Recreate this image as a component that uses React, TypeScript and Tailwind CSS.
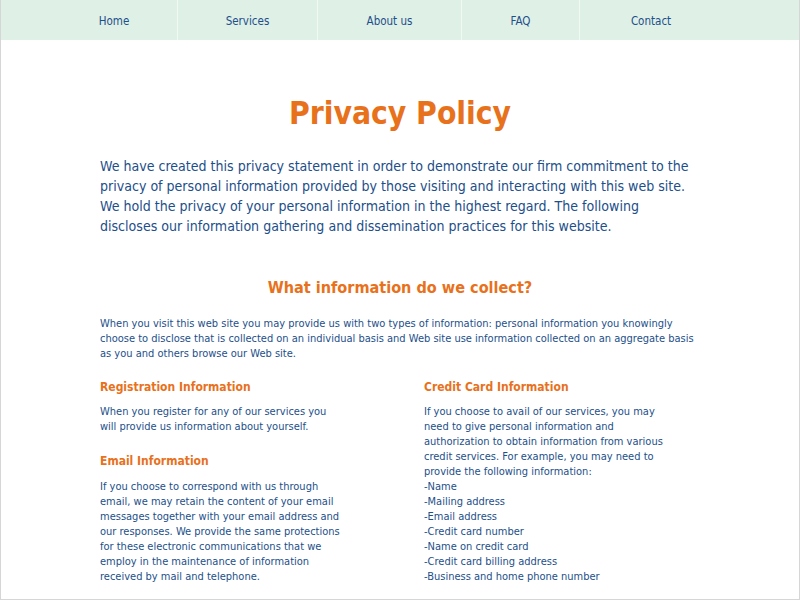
const nav = [
  { label: "Home", w: "w-[127px]" },
  { label: "Services", w: "w-[140px]" },
  { label: "About us", w: "w-[144px]" },
  { label: "FAQ", w: "w-[118px]" },
  { label: "Contact", w: "w-[142px]" },
];

const cardItems = [
  "-Name",
  "-Mailing address",
  "-Email address",
  "-Credit card number",
  "-Name on credit card",
  "-Credit card billing address",
  "-Business and home phone number",
];

export default function App() {
  return (
    <div className="h-[600px] w-[800px] overflow-hidden border border-t-0 border-[#d6d6d6] bg-white font-['DejaVu_Sans_Condensed','DejaVu_Sans',sans-serif] text-[#1d4f8a]">
      {/* top menu */}
      <nav className="flex h-10 bg-[#dff0e6] pl-[50px] text-[11.5px]">
        {nav.map((item, i) => (
          <a
            key={item.label}
            href="#"
            className={`flex items-center justify-center pt-[3px] ${item.w} ${
              i < nav.length - 1 ? "border-r border-[#f1f9f4]" : ""
            }`}
          >
            {item.label}
          </a>
        ))}
      </nav>

      <main className="px-[99px]">
        <h1 className="mt-[54px] text-center text-[31.5px] font-bold leading-[38px] text-[#e8711c]">
          Privacy Policy
        </h1>

        <p className="mt-[24px] text-[14.05px] leading-5">
          We have created this privacy statement in order to demonstrate our firm commitment to the
          privacy of personal information provided by those visiting and interacting with this web site.
          We hold the privacy of your personal information in the highest regard. The following
          discloses our information gathering and dissemination practices for this website.
        </p>

        <h2 className="mt-[41px] text-center text-[16.1px] font-bold leading-[22px] text-[#e8711c]">
          What information do we collect?
        </h2>

        <p className="mt-[16.5px] w-[595px] text-[11px] leading-[15px]">
          When you visit this web site you may provide us with two types of information: personal
          information you knowingly choose to disclose that is collected on an individual basis and Web
          site use information collected on an aggregate basis as you and others browse our Web site.
        </p>

        <div className="mt-[18.5px] flex text-[11px] leading-[15px]">
          <div className="w-[245px]">
            <h3 className="text-[12px] font-bold leading-4 text-[#e8711c]">Registration Information</h3>
            <p className="mt-[8.5px]">
              When you register for any of our services you will provide us information about yourself.
            </p>
            <h3 className="mt-[19.5px] text-[12px] font-bold leading-4 text-[#e8711c]">Email Information</h3>
            <p className="mt-[9.5px]">
              If you choose to correspond with us through email, we may retain the content of your email
              messages together with your email address and our responses. We provide the same
              protections for these electronic communications that we employ in the maintenance of
              information received by mail and telephone.
            </p>
          </div>
          <div className="ml-[79px] w-[248px]">
            <h3 className="text-[12px] font-bold leading-4 text-[#e8711c]">Credit Card Information</h3>
            <p className="mt-[8.5px]">
              If you choose to avail of our services, you may need to give personal information and
              authorization to obtain information from various credit services. For example, you may
              need to provide the following information:
            </p>
            <ul>
              {cardItems.map((c) => (
                <li key={c}>{c}</li>
              ))}
            </ul>
          </div>
        </div>
      </main>
    </div>
  );
}
